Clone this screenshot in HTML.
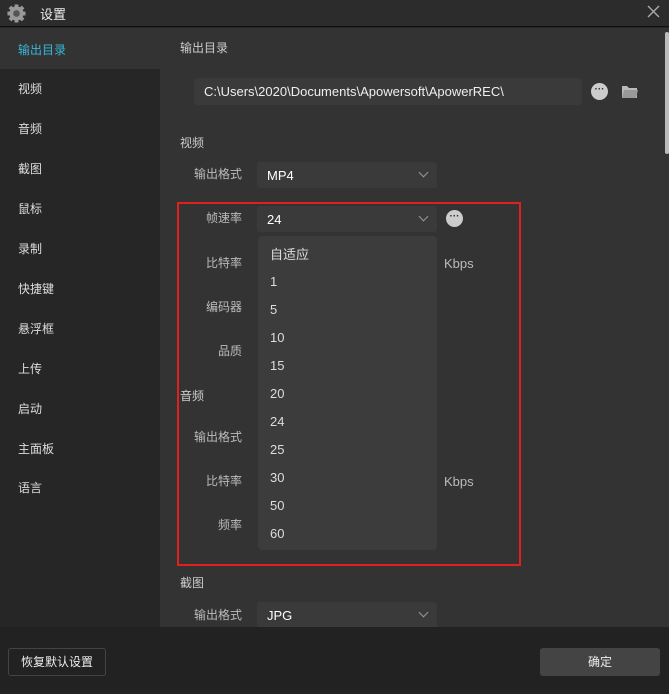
<!DOCTYPE html>
<html><head><meta charset="utf-8"><style>
*{margin:0;padding:0;box-sizing:border-box}
body{width:669px;height:694px;background:#262626;font-family:"Liberation Sans","Noto Sans CJK SC",sans-serif;color:#ddd;position:relative;overflow:hidden;font-size:12px}
.a{position:absolute}
.title{left:0;top:0;width:669px;height:27px;background:#2c2c2c;border-bottom:1px solid #111}
.side{left:0;top:28px;width:160px;height:599px;background:#262626}
.main{left:160px;top:28px;width:509px;height:599px;background:#333}
.si{position:absolute;left:18px;font-size:12px;color:#ddd}
.lbl{position:absolute;font-size:12px;color:#bbb}
.hd{position:absolute;font-size:12px;color:#ccc}
.sel{position:absolute;background:#3a3a3a;border-radius:3px;height:26px;color:#fff;font-size:13px;padding:6px 10px}
.chev{position:absolute;right:10px;top:7px;width:7px;height:7px;border-right:1px solid #999;border-bottom:1px solid #999;transform:rotate(45deg)}
.dot{position:absolute;width:17px;height:17px;border-radius:50%;background:#ccc;color:#333;font-size:10px;text-align:center;line-height:13px;font-weight:bold}
.dd div{position:absolute;left:12px;font-size:13px;color:#ddd}
</style></head><body>
<div class="a title"></div>
<svg class="a" style="left:7px;top:4px" width="19" height="19" viewBox="0 0 20 20"><circle cx="10" cy="10" r="7.5" fill="#999"/><g fill="#999"><rect x="8" y="0.5" width="4" height="4"/><rect x="8" y="15.5" width="4" height="4"/><rect x="0.5" y="8" width="4" height="4"/><rect x="15.5" y="8" width="4" height="4"/><rect x="2.5" y="2.5" width="4" height="4" transform="rotate(45 4.5 4.5)"/><rect x="13.5" y="2.5" width="4" height="4" transform="rotate(45 15.5 4.5)"/><rect x="2.5" y="13.5" width="4" height="4" transform="rotate(45 4.5 15.5)"/><rect x="13.5" y="13.5" width="4" height="4" transform="rotate(45 15.5 15.5)"/></g><circle cx="10" cy="10" r="3.5" fill="#555"/></svg>
<div class="a" style="left:40px;top:4px;font-size:13px;color:#eee">设置</div>
<svg class="a" style="left:647px;top:5px" width="13" height="13" viewBox="0 0 13 13"><path d="M1 1L12 12M12 1L1 12" stroke="#aaa" stroke-width="1.4"/></svg>
<div class="a side"></div>
<div class="a" style="left:0;top:28px;width:160px;height:41px;background:#333"></div>
<div class="si" style="top:41px;color:#3ab7d8">输出目录</div>
<div class="si" style="top:80px">视频</div>
<div class="si" style="top:120px">音频</div>
<div class="si" style="top:160px">截图</div>
<div class="si" style="top:200px">鼠标</div>
<div class="si" style="top:240px">录制</div>
<div class="si" style="top:280px">快捷键</div>
<div class="si" style="top:320px">悬浮框</div>
<div class="si" style="top:360px">上传</div>
<div class="si" style="top:400px">启动</div>
<div class="si" style="top:440px">主面板</div>
<div class="si" style="top:479px">语言</div>
<div class="a main"></div>
<div class="a" style="left:665px;top:32px;width:4px;height:122px;background:#bbb;border-radius:2px"></div>
<div class="hd" style="left:180px;top:39px">输出目录</div>
<div class="sel" style="left:194px;top:78px;width:388px;height:27px;font-size:13px;color:#eee">C:\Users\2020\Documents\Apowersoft\ApowerREC\</div>
<div class="dot" style="left:591px;top:83px">···</div>
<svg class="a" style="left:621px;top:84px" width="18" height="15" viewBox="0 0 18 15"><path d="M1 2h5l2 2h8v10H1z" fill="#bbb"/><path d="M3 6h14l-2 8H1z" fill="#999"/></svg>
<div class="hd" style="left:180px;top:134px">视频</div>
<div class="lbl" style="left:194px;top:165px">输出格式</div>
<div class="sel" style="left:257px;top:162px;width:180px">MP4<i class="chev"></i></div>
<div class="lbl" style="left:206px;top:209px">帧速率</div>
<div class="sel" style="left:257px;top:206px;width:180px">24<i class="chev"></i></div>
<div class="dot" style="left:446px;top:210px">···</div>
<div class="lbl" style="left:206px;top:254px">比特率</div>
<div class="lbl" style="left:444px;top:256px;font-size:13px">Kbps</div>
<div class="lbl" style="left:206px;top:298px">编码器</div>
<div class="lbl" style="left:218px;top:342px">品质</div>
<div class="hd" style="left:180px;top:387px">音频</div>
<div class="lbl" style="left:194px;top:428px">输出格式</div>
<div class="lbl" style="left:206px;top:472px">比特率</div>
<div class="lbl" style="left:444px;top:474px;font-size:13px">Kbps</div>
<div class="lbl" style="left:218px;top:516px">频率</div>
<div class="a dd" style="left:258px;top:236px;width:179px;height:314px;background:#3c3c3c;border-radius:4px">
<div style="top:8px">自适应</div><div style="top:38px">1</div><div style="top:66px">5</div><div style="top:94px">10</div><div style="top:122px">15</div><div style="top:150px">20</div><div style="top:178px">24</div><div style="top:206px">25</div><div style="top:234px">30</div><div style="top:262px">50</div><div style="top:290px">60</div>
</div>
<div class="a" style="left:177px;top:202px;width:344px;height:364px;border:2px solid #e0201d"></div>
<div class="hd" style="left:180px;top:574px">截图</div>
<div class="lbl" style="left:194px;top:606px">输出格式</div>
<div class="sel" style="left:257px;top:602px;width:180px">JPG<i class="chev"></i></div>
<div class="a" style="left:0;top:627px;width:669px;height:67px;background:#222"></div>
<div class="a" style="left:8px;top:648px;width:98px;height:28px;border:1px solid #444;border-radius:3px;font-size:12px;color:#eee;text-align:center;line-height:26px">恢复默认设置</div>
<div class="a" style="left:540px;top:648px;width:120px;height:28px;background:#444;border-radius:3px;font-size:12px;color:#eee;text-align:center;line-height:28px">确定</div>
</body></html>
